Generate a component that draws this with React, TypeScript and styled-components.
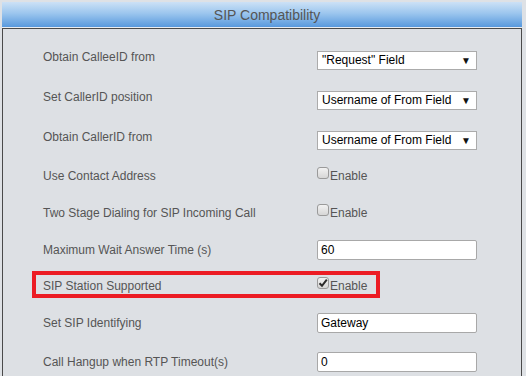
import React from "react";
import styled, { createGlobalStyle } from "styled-components";

const Global = createGlobalStyle`
  html, body { margin: 0; padding: 0; background: #dee1e5; }
  body { font-family: "Liberation Sans", Arial, sans-serif; overflow: hidden; }
`;

const Page = styled.div`
  display: flex;
  flex-direction: column;
  padding: 2px 4px 0 2px;
  height: 376px;
  box-sizing: border-box;
  overflow: hidden;
`;

const Header = styled.div`
  flex: none;
  height: 25px;
  line-height: 26px;
  background: linear-gradient(to bottom, #cce1f6 0%, #9cc6ee 45%, #5899dd 100%);
  border-bottom: 1px solid #e9edf1;
  color: #555;
  font-size: 14px;
  text-align: center;
  padding-left: 10px;
`;

const Panel = styled.div`
  flex: 1;
  min-height: 0;
  overflow: hidden;
  border: 1px solid #4a4a4a;
  border-bottom: none;
  background: #dde0e4;
  padding-top: 8px;
`;

const Row = styled.div<{ $h: number }>`
  position: relative;
  display: flex;
  align-items: center;
  height: ${(p) => p.$h}px;
`;

const Label = styled.div`
  width: 274px;
  padding-left: 40px;
  box-sizing: content-box;
  font-size: 12px;
  color: #555;
  flex: none;
`;

const SelectBox = styled.div`
  position: relative;
  width: 160px;
  height: 19px;
  box-sizing: border-box;
  margin-top: 6px;
  background: #fff;
  border: 1px solid #ababab;
  font-size: 12px;
  line-height: 17px;
  color: #000;
  padding-left: 4px;
`;

const Arrow = styled.span`
  position: absolute;
  right: 5px;
  top: 0;
  font-size: 10px;
  line-height: 17px;
  color: #111;
`;

const TextInput = styled.input`
  width: 160px;
  height: 20px;
  box-sizing: border-box;
  border: 1px solid #a8a8a8;
  border-radius: 2px;
  background: #fff;
  font-family: "Liberation Sans", Arial, sans-serif;
  font-size: 12px;
  color: #000;
  padding: 0 0 0 3px;
  margin: 0;
  outline: none;
`;

const CheckWrap = styled.label`
  display: flex;
  align-items: flex-start;
  font-size: 12px;
  color: #555;
  line-height: 14px;
`;

const Box = styled.span`
  display: inline-flex;
  align-items: center;
  justify-content: center;
  width: 12px;
  height: 12px;
  box-sizing: border-box;
  margin-top: -2px;
  margin-right: 1px;
  border: 1px solid #9a9a9a;
  border-radius: 3px;
  background: linear-gradient(to bottom, #f2f2f2, #d6d6d6);
`;

const Highlight = styled.div`
  position: absolute;
  left: 29px;
  top: 3px;
  width: 348px;
  height: 27px;
  box-sizing: border-box;
  border: 4px solid #ec1c24;
  pointer-events: none;
`;

const Check = () => (
  <svg width="10" height="10" viewBox="0 0 10 10">
    <path d="M1.5 5.2 L4 7.8 L8.8 1.6" fill="none" stroke="#2b2b2b" strokeWidth="2" />
  </svg>
);

const Checkbox = ({ checked }: { checked?: boolean }) => (
  <CheckWrap>
    <Box>{checked && <Check />}</Box>
    Enable
  </CheckWrap>
);

const Select = ({ value }: { value: string }) => (
  <SelectBox>
    {value}
    <Arrow>▼</Arrow>
  </SelectBox>
);

export default function App() {
  return (
    <>
      <Global />
      <Page>
        <Header>SIP Compatibility</Header>
        <Panel>
          <Row $h={40}>
            <Label>Obtain CalleeID from</Label>
            <Select value={'"Request" Field'} />
          </Row>
          <Row $h={40}>
            <Label>Set CallerID position</Label>
            <Select value="Username of From Field" />
          </Row>
          <Row $h={40}>
            <Label>Obtain CallerID from</Label>
            <Select value="Username of From Field" />
          </Row>
          <Row $h={38}>
            <Label>Use Contact Address</Label>
            <Checkbox />
          </Row>
          <Row $h={36}>
            <Label>Two Stage Dialing for SIP Incoming Call</Label>
            <Checkbox />
          </Row>
          <Row $h={37}>
            <Label>Maximum Wait Answer Time (s)</Label>
            <TextInput defaultValue="60" />
          </Row>
          <Row $h={36}>
            <Highlight />
            <Label>SIP Station Supported</Label>
            <Checkbox checked />
          </Row>
          <Row $h={38}>
            <Label>Set SIP Identifying</Label>
            <TextInput defaultValue="Gateway" />
          </Row>
          <Row $h={39}>
            <Label>Call Hangup when RTP Timeout(s)</Label>
            <TextInput defaultValue="0" />
          </Row>
        </Panel>
      </Page>
    </>
  );
}
